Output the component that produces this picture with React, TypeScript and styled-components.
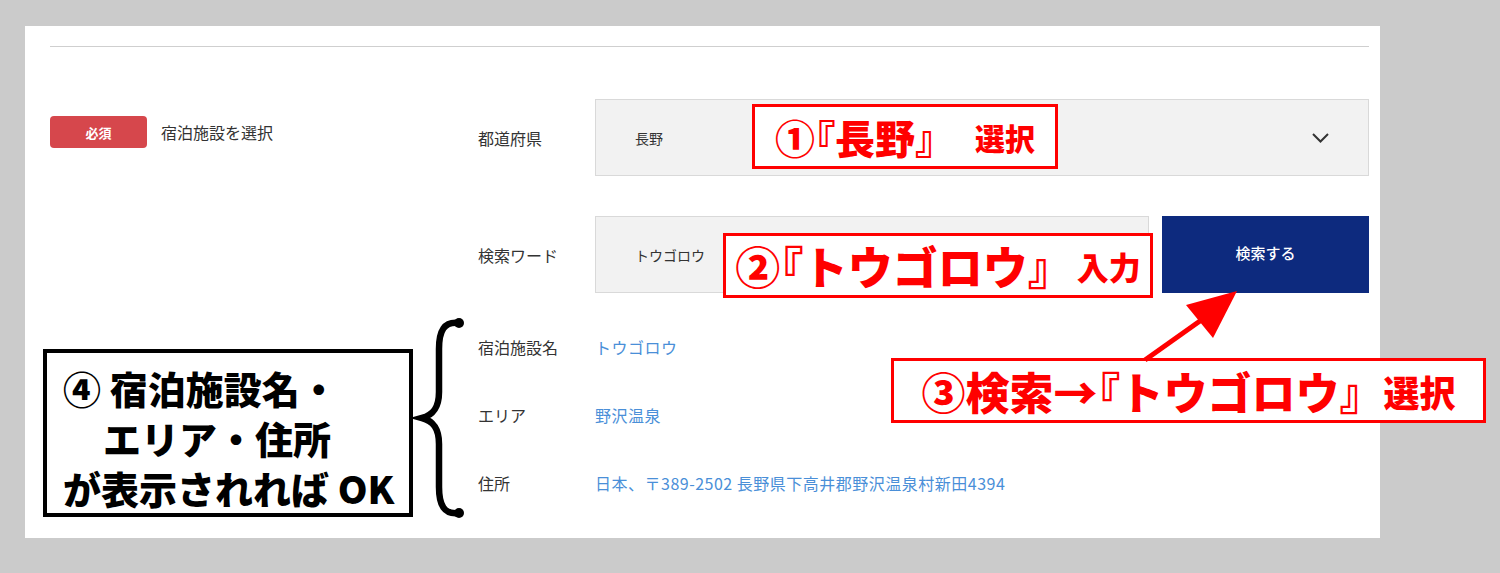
import React from "react";
import styled, { createGlobalStyle } from "styled-components";

const GlobalStyle = createGlobalStyle`
  html, body { margin: 0; padding: 0; }
  body {
    background: #cbcbcb;
    font-family: "Noto Sans CJK JP", "Noto Sans", sans-serif;
    color: #333;
  }
  * { box-sizing: border-box; }
`;

const Page = styled.div`
  position: relative;
  width: 1500px;
  height: 573px;
  padding: 26px 0 0 25px;
  overflow: hidden;
`;

const Panel = styled.section`
  width: 1355px;
  height: 512px;
  background: #fff;
  padding: 20px 11px 0 25px;
`;

const Divider = styled.hr`
  margin: 0;
  border: 0;
  border-top: 1px solid #cfcfcf;
`;

const Body = styled.div`
  display: flex;
  margin-top: 52px;
`;

const Aside = styled.div`
  width: 428px;
  display: flex;
  align-items: center;
  gap: 14px;
  align-self: flex-start;
  padding-top: 17px;
`;

const Badge = styled.span`
  width: 97px;
  height: 32px;
  border-radius: 4px;
  background: #d6474c;
  color: #fff;
  font-size: 13px;
  font-weight: 700;
  display: flex;
  align-items: center;
  justify-content: center;
`;

const AsideTitle = styled.span`
  font-size: 16px;
  color: #333;
`;

const Form = styled.div`
  flex: 1;
  display: flex;
  flex-direction: column;
`;

const FieldRow = styled.div<{ $top?: number }>`
  display: flex;
  align-items: center;
  gap: 13px;
  margin-top: ${(p) => p.$top ?? 0}px;
`;

const FieldLabel = styled.span`
  width: 104px;
  font-size: 16px;
  color: #333;
`;

const Control = styled.div<{ $grow?: boolean; $width?: number }>`
  ${(p) => (p.$grow ? "flex: 1;" : `width: ${p.$width}px;`)}
  height: 77px;
  background: #f2f2f2;
  border: 1px solid #d9d9d9;
  display: flex;
  align-items: center;
  justify-content: space-between;
  padding: 0 39px;
  font-size: 14px;
  color: #333;
`;

const SearchButton = styled.button`
  width: 207px;
  height: 77px;
  border: 0;
  padding: 0 0 4px;
  background: #0d2a7e;
  color: #fff;
  font-family: inherit;
  font-size: 15px;
  font-weight: 500;
  display: flex;
  align-items: center;
  justify-content: center;
`;

const InfoList = styled.dl`
  margin: 20px 0 0;
`;

const InfoRow = styled.div`
  display: flex;
  align-items: center;
  height: 68px;
`;

const InfoLabel = styled.dt`
  width: 117px;
  font-size: 16px;
  color: #333;
`;

const InfoValue = styled.dd`
  margin: 0;
  font-size: 16px;
  letter-spacing: 0.5px;
  color: #4a8fd8;
`;

const RedNote = styled.div<{ $x: number; $y: number; $w: number }>`
  position: absolute;
  left: ${(p) => p.$x}px;
  top: ${(p) => p.$y}px;
  width: ${(p) => p.$w}px;
  height: 65px;
  border: 3px solid #f00;
  background: #fff;
  color: #f00;
  display: flex;
  align-items: center;
  justify-content: center;
  font-weight: 900;
  white-space: nowrap;
`;

const NoteText = styled.span<{ $size: number; $gap?: number }>`
  font-size: ${(p) => p.$size}px;
  line-height: 1;
  margin-left: ${(p) => p.$gap ?? 0}px;
`;

const OpenBracket = styled.span`
  font-feature-settings: "palt";
`;

const BlackNote = styled.div`
  position: absolute;
  left: 43px;
  top: 349px;
  width: 370px;
  height: 168px;
  border: 4px solid #000;
  background: #fff;
  padding: 10px 0 0 16px;
  color: #000;
  font-weight: 900;
  font-size: 38px;
  line-height: 50px;
  white-space: nowrap;
`;

const NoteLine = styled.div<{ $indent?: number }>`
  padding-left: ${(p) => p.$indent ?? 0}px;
`;

const Overlay = styled.svg`
  position: absolute;
  left: 0;
  top: 0;
  pointer-events: none;
`;

const Chevron = () => (
  <svg width="17" height="10" viewBox="0 0 17 10" fill="none">
    <path d="M1 1 L8.5 8.5 L16 1" stroke="#333" strokeWidth="2" />
  </svg>
);

export default function App() {
  return (
    <>
      <GlobalStyle />
      <Page>
        <Panel>
          <Divider />
          <Body>
            <Aside>
              <Badge>必須</Badge>
              <AsideTitle>宿泊施設を選択</AsideTitle>
            </Aside>
            <Form>
              <FieldRow>
                <FieldLabel>都道府県</FieldLabel>
                <Control $grow>
                  <span>長野</span>
                  <Chevron />
                </Control>
              </FieldRow>
              <FieldRow $top={40}>
                <FieldLabel>検索ワード</FieldLabel>
                <Control $width={554}>
                  <span>トウゴロウ</span>
                </Control>
                <SearchButton>検索する</SearchButton>
              </FieldRow>
              <InfoList>
                <InfoRow>
                  <InfoLabel>宿泊施設名</InfoLabel>
                  <InfoValue>トウゴロウ</InfoValue>
                </InfoRow>
                <InfoRow>
                  <InfoLabel>エリア</InfoLabel>
                  <InfoValue>野沢温泉</InfoValue>
                </InfoRow>
                <InfoRow>
                  <InfoLabel>住所</InfoLabel>
                  <InfoValue>日本、〒389-2502 長野県下高井郡野沢温泉村新田4394</InfoValue>
                </InfoRow>
              </InfoList>
            </Form>
          </Body>
        </Panel>

        <RedNote $x={752} $y={104} $w={306}>
          <NoteText $size={40}>
            ①<OpenBracket>『</OpenBracket>長野』
          </NoteText>
          <NoteText $size={30} $gap={20}>選択</NoteText>
        </RedNote>
        <RedNote $x={723} $y={233} $w={430}>
          <NoteText $size={45}>
            ②<OpenBracket>『</OpenBracket>トウゴロウ』
          </NoteText>
          <NoteText $size={32} $gap={4}>入力</NoteText>
        </RedNote>
        <RedNote $x={891} $y={358} $w={595}>
          <NoteText $size={44}>
            ③検索→<OpenBracket>『</OpenBracket>トウゴロウ』
          </NoteText>
          <NoteText $size={36} $gap={0}>選択</NoteText>
        </RedNote>

        <BlackNote>
          <NoteLine>④ 宿泊施設名・</NoteLine>
          <NoteLine $indent={40}>エリア・住所</NoteLine>
          <NoteLine>が表示されれば OK</NoteLine>
        </BlackNote>

        <Overlay width="1500" height="573" viewBox="0 0 1500 573">
          <path
            d="M459 323 C444 321 439 331 439 349 L439 392 C439 408 433 415 422 418 C433 421 439 428 439 444 L439 487 C439 505 444 515 459 513"
            fill="none"
            stroke="#000"
            strokeWidth="6.5"
            strokeLinecap="round"
          />
          <circle cx="459" cy="323" r="5" fill="#000" />
          <circle cx="459" cy="513" r="5" fill="#000" />
          <line x1="1145" y1="360" x2="1207" y2="316" stroke="#f00" strokeWidth="5" />
          <polygon points="1237,291 1186,305 1213,338" fill="#f00" />
        </Overlay>
      </Page>
    </>
  );
}
